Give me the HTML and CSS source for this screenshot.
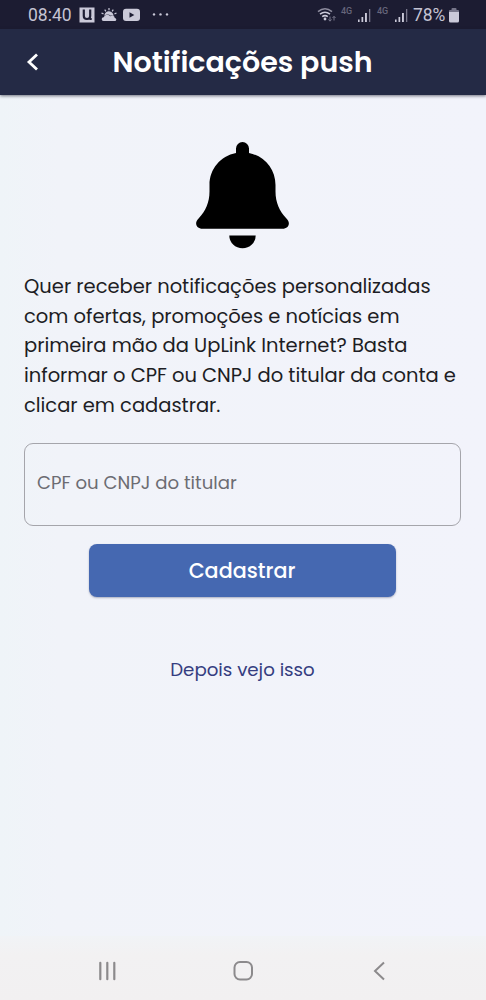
FILE: index.html
```html
<!DOCTYPE html>
<html lang="pt-BR">
<head>
<meta charset="utf-8">
<meta name="viewport" content="width=device-width, initial-scale=1">
<title>Notificações push</title>
<link rel="stylesheet" href="styles.css">
</head>
<body>
<div class="screen">
  <div class="status">
    <span class="clock">08:40</span>
    <svg class="status-left" width="92" height="16" viewBox="0 0 92 16" aria-hidden="true">
      <rect x="0.5" y="0.5" width="15" height="15" fill="#cbcad9"/>
      <path d="M4.800 2.500v6.500q0 3 3.200 3t3.200-3V2.500M10.500 12h2.200" fill="none" stroke="#1e1e34" stroke-width="2.200"/>
      <g fill="#cbcad9">
        <path d="M24.500 14a1.900 1.900 0 0 1 .2-3.800a3.900 3.900 0 0 1 6.700-.9a2.700 2.700 0 0 1 4.400 1.700a1.500 1.500 0 0 1 0 3z"/>
        <path d="M25.300 8.700a4.500 4.500 0 0 1 9.200.4q-1.200-.9-2.700-.4q-3.200-2.300-6.500 0z"/>
        <path d="M30 1v2.200M25.700 2.700l1.200 1.600M34.300 2.700l-1.200 1.600M22.500 6l2 .9M37.500 6l-2 .9" stroke="#cbcad9" stroke-width="1.200"/>
        <rect x="44" y="1.800" width="17" height="12.200" rx="3"/>
      </g>
      <path d="M50.500 5.300v5.400L55.300 8z" fill="#1e1e34"/>
      <g fill="#cbcad9"><circle cx="75" cy="7.400" r="1.200"/><circle cx="81.500" cy="7.400" r="1.200"/><circle cx="88" cy="7.400" r="1.200"/></g>
    </svg>
    <div class="status-right">
      <svg class="wifi" width="20" height="16" viewBox="0 0 20 16" fill="none" stroke="#cbcad9" stroke-width="1.600" aria-hidden="true">
        <path d="M1 4.600q7-5.600 14 0" stroke="#8d8c9e"/>
        <path d="M3 7.200q5-3.800 10 0M5.200 9.700q2.800-2.100 5.600 0"/>
        <circle cx="8" cy="12" r="1.400" fill="#cbcad9" stroke="none"/>
        <path d="M13 9.500v4.500M11.500 12.500l1.500 1.700l1.500-1.700M17 13.500V9.500M15.500 11L17 9.300L18.500 11" stroke="#77768a" stroke-width="1"/>
      </svg>
      <span class="net">4G</span>
      <svg class="bars" width="14" height="14" viewBox="0 0 14 14" fill="#cbcad9" aria-hidden="true"><rect x="0" y="10.500" width="1.600" height="2.500"/><rect x="3.500" y="8" width="1.700" height="5"/><rect x="7" y="4" width="1.900" height="9"/><rect x="11" y="0" width="1.300" height="13" fill="#77768a"/></svg>
      <span class="net">4G</span>
      <svg class="bars" width="14" height="14" viewBox="0 0 14 14" fill="#cbcad9" aria-hidden="true"><rect x="0" y="10.500" width="1.600" height="2.500"/><rect x="3.500" y="8" width="1.700" height="5"/><rect x="7" y="4" width="1.900" height="9"/><rect x="11" y="0" width="1.300" height="13" fill="#77768a"/></svg>
      <span class="percent">78%</span>
      <svg class="battery" width="10" height="15" viewBox="0 0 10 15" aria-hidden="true"><path d="M2.500 2V1q0-1 1-1h3q1 0 1 1v1H9q1 0 1 1v1.500H0V3q0-1 1-1z" fill="#77768a"/><path d="M0 4h10v9q0 1.500-1.500 1.500h-7Q0 14.500 0 13z" fill="#cbcad9"/></svg>
    </div>
  </div>
  <header class="appbar">
    <svg class="back" width="14" height="20" viewBox="0 0 14 20" aria-label="Voltar"><path d="M12 2.500L4 10L12 17.500" fill="none" stroke="#fff" stroke-width="2.800"/></svg>
    <h1 class="title">Notificações push</h1>
  </header>
  <main class="content">
    <svg class="bell" width="94" height="107" viewBox="0 0 94 107" aria-hidden="true">
      <path d="M40 11V6.500a6.500 6.500 0 0 1 13 0V11C68.500 14 79.500 27 79.500 43v6.500c0 11 4 19.500 10.500 26.500l1.300 1.500c3.500 4.200.8 9.200-4.800 9.200h-80C.9 86.700-1.800 81.700 1.700 77.500L3 76C9.500 69 13.500 60.500 13.500 49.500V43C13.500 27 24.500 14 40 11z"/>
      <path d="M33.300 93.500h26.400a13.200 12.800 0 0 1-26.400 0z"/>
    </svg>
    <p class="message">
      <span class="line">Quer receber notificações personalizadas</span>
      <span class="line">com ofertas, promoções e notícias em</span>
      <span class="line">primeira mão da UpLink Internet? Basta</span>
      <span class="line">informar o CPF ou CNPJ do titular da conta e</span>
      <span class="line">clicar em cadastrar.</span>
    </p>
    <div class="field"><span class="placeholder">CPF ou CNPJ do titular</span></div>
    <button class="submit" type="button"><span>Cadastrar</span></button>
    <a class="later">Depois vejo isso</a>
  </main>
  <nav class="navbar">
    <svg width="20" height="20" viewBox="0 0 20 20" aria-hidden="true"><path d="M3.300 1.800v16.400M10.300 1.800v16.400M17.300 1.800v16.400" stroke="#8c8a8c" stroke-width="2.200" stroke-linecap="round"/></svg>
    <svg width="20" height="20" viewBox="0 0 20 20" aria-hidden="true"><rect x="1.500" y="1" width="17.500" height="17.500" rx="5.500" fill="none" stroke="#8c8a8c" stroke-width="2"/></svg>
    <svg width="20" height="20" viewBox="0 0 20 20" aria-hidden="true"><path d="M15 1.500L6 10L15 18.500" fill="none" stroke="#8c8a8c" stroke-width="2"/></svg>
  </nav>
</div>
</body>
</html>
```
FILE: styles.css
```css
* { box-sizing: border-box; }
body { margin: 0; font-family: Poppins, Inter, "Open Sans", sans-serif; }
svg { display: block; flex: none; }
.screen {
  width: 486px; height: 1000px; overflow: hidden;
  display: flex; flex-direction: column;
  background: linear-gradient(90deg, #eff4f8 0, #f1f3f9 12%, #f2f3fb 100%);
}
.status {
  flex: none; height: 29px; display: flex; align-items: center;
  padding: 3px 27px 0 28px; background: #1c1c32; color: #c4c3d3;
  font-family: Roboto, sans-serif; font-size: 17.500px; line-height: 1;
}
.clock { width: 51px; white-space: nowrap; }
.status-left { margin-top: -3px; }
.status-right { margin-left: auto; display: flex; align-items: center; }
.wifi { margin: -3px -1px 0 1px; }
.net { font-size: 9px; font-weight: 500; color: #66657a; margin: -9px 5px 0 5px; width: 12px; }
.bars + .net { margin-left: 5px; margin-right: 6px; }
.bars { margin-top: 0; }
.percent { margin-left: 4px; width: 36px; white-space: nowrap; letter-spacing: -.1px; }
.battery { margin: -2px 0 0 0; }
.appbar {
  flex: none; position: relative; z-index: 1; height: 66px;
  display: flex; align-items: center; padding-left: 25px;
  background: #242a45; color: #fff; box-shadow: 0 1px 3px rgba(25, 28, 45, .6);
}
.title { margin: 0 0 0 73.500px; font-size: 28.500px; font-weight: 600; line-height: 40px; white-space: nowrap; }
.content { flex: 1; display: flex; flex-direction: column; align-items: center; padding: 47px 25px 0 24px; }
.message { align-self: stretch; margin: 23px 0 0; color: #1d1d24; font-size: 19.500px; line-height: 29.700px; letter-spacing: -.02px; }
.line { display: block; width: max-content; white-space: nowrap; }
.field {
  align-self: stretch; height: 83px; margin-top: 22.500px; padding: 0 12px 4px;
  display: flex; align-items: center; border: 1px solid #a5a5ab; border-radius: 9px;
  color: #6c6c72; font-size: 18.150px;
}
.placeholder { white-space: nowrap; }
.submit {
  width: 307px; height: 53px; margin-top: 18px; padding: 0 1px 1px 0; border: 0; border-radius: 8px;
  background: #4568b1; color: #fff; font: 500 20.700px Poppins, Inter, sans-serif;
  box-shadow: 0 1px 2px rgba(40, 50, 90, .35);
}
.later { margin-top: 61px; color: #353d80; font-size: 18.200px; line-height: 24px; white-space: nowrap; }
.navbar {
  flex: none; height: 64px; display: flex; justify-content: space-between; align-items: center;
  padding: 5px 97px 0; background: linear-gradient(#f1f3f6, #f2f1f2 30%, #f2f0f1);
}
```
